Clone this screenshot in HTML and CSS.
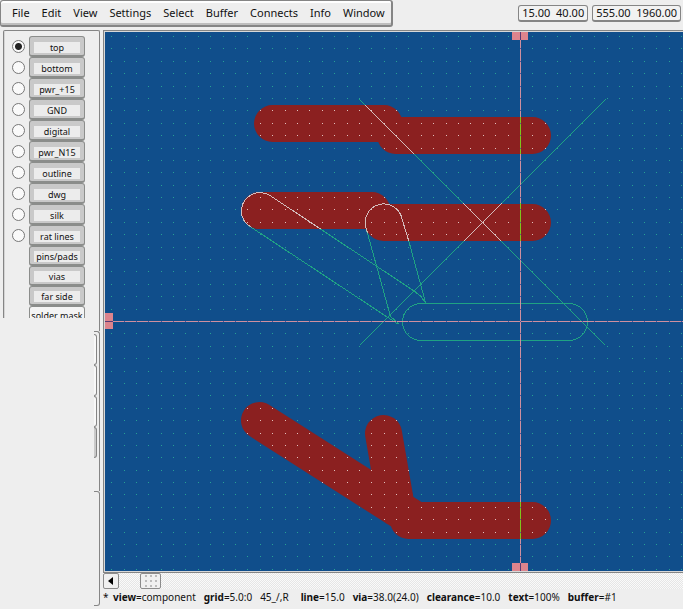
FILE: index.html
```html
<!DOCTYPE html>
<html lang="en">
<head>
<meta charset="utf-8">
<title>PCB layout</title>
<link rel="stylesheet" href="styles.css">
</head>
<body>
<header class="topbar">
  <nav class="menu">
    <button>File</button><button>Edit</button><button>View</button><button>Settings</button><button>Select</button><button>Buffer</button><button>Connects</button><button>Info</button><button>Window</button>
  </nav>
  <div class="readouts">
    <output class="readout">15.00&nbsp; 40.00</output>
    <output class="readout">555.00&nbsp; 1960.00</output>
  </div>
</header>
<main class="workspace">
  <aside class="sidebar">
    <div class="layers">
      <div class="layer"><input type="radio" name="layer" id="l0" checked><label class="chip" for="l0"><span>top</span></label></div>
      <div class="layer"><input type="radio" name="layer" id="l1"><label class="chip" for="l1"><span>bottom</span></label></div>
      <div class="layer"><input type="radio" name="layer" id="l2"><label class="chip" for="l2"><span>pwr_+15</span></label></div>
      <div class="layer"><input type="radio" name="layer" id="l3"><label class="chip" for="l3"><span>GND</span></label></div>
      <div class="layer"><input type="radio" name="layer" id="l4"><label class="chip" for="l4"><span>digital</span></label></div>
      <div class="layer"><input type="radio" name="layer" id="l5"><label class="chip" for="l5"><span>pwr_N15</span></label></div>
      <div class="layer"><input type="radio" name="layer" id="l6"><label class="chip" for="l6"><span>outline</span></label></div>
      <div class="layer"><input type="radio" name="layer" id="l7"><label class="chip" for="l7"><span>dwg</span></label></div>
      <div class="layer"><input type="radio" name="layer" id="l8"><label class="chip" for="l8"><span>silk</span></label></div>
      <div class="layer"><input type="radio" name="layer" id="l9"><label class="chip" for="l9"><span>rat lines</span></label></div>
      <div class="layer extra"><button class="chip"><span>pins/pads</span></button></div>
      <div class="layer extra"><button class="chip"><span>vias</span></button></div>
      <div class="layer extra"><button class="chip"><span>far side</span></button></div>
      <div class="layer extra"><button class="chip off"><span>solder mask</span></button></div>
    </div>
    <div class="edge"></div>
    <div class="stubs"><i></i><i></i><i></i><i class="dark"></i></div>
    <div class="stubs last"></div>
  </aside>
  <section class="editor">
    <div class="board">
      <svg width="100%" height="100%" role="img" aria-label="Board">
        <defs>
          <clipPath id="copper">
            <rect x="149" y="73" width="149" height="37" rx="18.5"/>
            <rect x="272" y="85" width="174" height="37" rx="18.5"/>
            <rect x="135" y="159" width="151" height="38" rx="19"/>
            <rect x="259" y="171" width="187" height="38" rx="19"/>
            <rect x="285" y="470" width="161" height="37" rx="18.5"/>
          </clipPath>
          <g id="wires" fill="none" stroke-width="1">
            <path d="M254.500 67.500 500.500 313.500M500.500 67.500 254.500 313.500"/>
            <rect x="297.500" y="271.500" width="185" height="37" rx="18.500"/>
            <path d="M293.500 292.500 145 194.500A18.500 18.500 0 0 1 136.500 179 18.500 18.500 0 0 1 155 160.500 18.500 18.500 0 0 1 165 163.500L309 259 315 263.500 320.500 270.500 303.500 208 297 187A18.500 18.500 0 1 0 260.500 194L271 232 285.500 284.500 294 292"/>
          </g>
        </defs>
        <g class="trace">
          <path d="M167.500 91.500H279M290.500 103.500H427.500M154.500 178.500H267M278.500 190.500H427.500M303.500 488.500H427.500M154.500 388.500 308 486.500M278.500 401.500 291.500 476"/>
        </g>
        <use href="#wires" class="wire"/>
        <use href="#wires" class="wire-hot" clip-path="url(#copper)"/>
        <g id="grid"></g>
        <line class="cross" x1="415.5" y1="0" x2="415.5" y2="100%"/>
        <line class="cross" x1="0" y1="289.5" x2="100%" y2="289.5"/>
        <rect class="cross-hot" x="415" y="0" width="1" height="100%" clip-path="url(#copper)"/>
        <g id="ticks"></g>
        <g class="mark">
          <rect x="407" y="0" width="16" height="8"/>
          <rect x="0" y="281" width="8" height="16"/>
          <rect x="407" y="531" width="16" height="8"/>
        </g>
        <path class="mark-line" d="M415.500 0V8M415.500 531V539M0 289.500H8"/>
      </svg>
    </div>
    <div class="scroll">
      <button class="arrow" aria-label="Scroll left"><svg width="6" height="8" viewBox="0 0 6 8"><path d="M5 0V8L0 4Z"/></svg></button>
      <div class="thumb"><svg width="12" height="12" viewBox="0 0 12 12"><path d="M0 1H2M5 1H7M10 1H12M0 6H2M5 6H7M10 6H12M0 11H2M5 11H7M10 11H12"/></svg></div>
    </div>
    <footer class="status"><span class="flag">*</span><span><b>view</b>=component</span><span><b>grid</b>=5.0:0</span><span>45_/,R</span><span class="wide"><b>line</b>=15.0</span><span><b>via</b>=38.0(24.0)</span><span><b>clearance</b>=10.0</span><span><b>text</b>=100%</span><span><b>buffer</b>=#1</span></footer>
  </section>
</main>
<script src="grid.js"></script>
</body>
</html>
```
FILE: grid.js
```js
// Draws the snap grid, recoloured where it lies on copper or on the crosshair.
const PITCH = 12.39, CX = 415, CY = 289;
const grid = document.getElementById('grid');
const ticks = document.getElementById('ticks');
const trace = document.querySelector('.trace path');
const NS = 'http://www.w3.org/2000/svg';
let plain = '', hot = '', axis = '';
for (let i = -33; i < 150; i++) {
  for (let j = -23; j < 100; j++) {
    const x = CX + Math.round(i * PITCH), y = CY + Math.round(j * PITCH);
    const cell = `M${x} ${y}h1v1h-1z`;
    if (i === 0 || j === 0) axis += cell;
    else if (trace.isPointInStroke(new DOMPoint(x, y))) hot += cell;
    else plain += cell;
  }
}
function add(parent, cls, d) {
  const p = document.createElementNS(NS, 'path');
  p.setAttribute('class', cls);
  p.setAttribute('d', d);
  parent.appendChild(p);
}
add(grid, 'dot', plain);
add(grid, 'dot-hot', hot);
add(ticks, 'dot-axis', axis);
```
FILE: styles.css
```css
* { box-sizing: border-box; }
body {
  margin: 0;
  height: 100vh;
  display: flex;
  flex-direction: column;
  background: #eeeeee;
  color: #111;
  font: 11px/16px "Noto Sans", sans-serif;
  overflow: hidden;
}
button { font: inherit; color: inherit; margin: 0; }
.topbar {
  height: 30px;
  flex: none;
  display: flex;
  justify-content: space-between;
  align-items: flex-start;
}
.menu {
  display: flex;
  gap: 12px;
  height: 27px;
  padding: 0 6px 0 11px;
  border: 2px solid #858585;
  border-top-width: 1px;
  border-left-width: 1px;
  border-radius: 3px;
  box-shadow: inset 0 2px #fff, inset 0 -2px #bebebe;
}
.menu button { border: 0; padding: 0; background: none; }
.readouts { display: flex; gap: 4px; padding: 5px 2px 0 0; }
.readout {
  height: 17px;
  padding: 0 3px;
  line-height: 14px;
  border: 1px solid #858585;
  border-bottom-width: 2px;
  border-radius: 3px;
  background: #f2f2f2;
}
.workspace { flex: 1; display: flex; min-height: 0; }
.sidebar {
  width: 100px;
  flex: none;
  display: flex;
  flex-direction: column;
  align-items: flex-end;
}
.layers {
  width: 97px;
  height: 288px;
  flex: none;
  overflow: hidden;
  padding-top: 5px;
  border: 1px solid #858585;
  border-bottom: 0;
  border-radius: 2px 2px 0 0;
  box-shadow: inset 1px 0 #d4d4d4;
}
.layer { display: flex; height: 21px; gap: 4px; padding-left: 8px; }
.layer.extra { height: 20px; padding-left: 25px; }
.layer input {
  appearance: none;
  flex: none;
  width: 13px;
  height: 13px;
  margin: 4px 0 0;
  border: 1px solid #777;
  border-radius: 50%;
  background: #fafafa;
}
.layer input:checked { background: radial-gradient(circle, #222 0 3px, #fafafa 4px); }
.chip {
  width: 56px;
  display: flex;
  justify-content: center;
  align-items: center;
  padding: 2px 0 0;
  border: 1px solid #8b8d8b;
  border-bottom-width: 2px;
  border-radius: 3px;
  background: #c9c9c9;
  font-size: 9px;
  line-height: 11px;
}
.chip span {
  width: 46px;
  height: 11px;
  display: flex;
  justify-content: center;
  background: #ececec;
  white-space: nowrap;
}
.chip.off { padding: 0; }
.chip.off, .chip.off span { background: #f4f4f4; }
.edge { width: 1px; height: 13px; background: #858585; }
.stubs {
  width: 6px;
  height: 160px;
  flex: none;
  padding: 2px 2px 0 0;
  border: solid #858585;
  border-width: 1px 1px 0 0;
  border-radius: 0 3px 0 0;
}
.stubs i {
  display: block;
  height: 31px;
  border: solid #858585;
  border-width: 1px 1px 1px 0;
  border-radius: 0 3px 3px 0;
  background: #f8f8f8;
}
.stubs .dark { background: #c9c9c9; }
.stubs.last { height: 115px; border-bottom-width: 1px; border-radius: 0 3px 3px 0; }
.editor {
  flex: 1;
  min-width: 0;
  margin-left: 3px;
  display: flex;
  flex-direction: column;
}
.board {
  flex: 1;
  min-height: 0;
  border: solid #858585;
  border-width: 1px 0 1px 1px;
  padding: 1px 0 1px 1px;
  background: #d8d8d8;
  overflow: hidden;
}
.board svg { display: block; background: #104e8b; }
.trace { fill: none; stroke: #8b2020; stroke-width: 37; stroke-linecap: round; }
.wire { stroke: #1fa383; shape-rendering: crispEdges; }
.wire-hot { stroke: #d4bdbd; shape-rendering: crispEdges; }
.dot { fill: #27a094; }
.dot-hot { fill: #e2c0bd; }
.dot-axis { fill: #5c5494; }
.cross { stroke: #cf8f9f; stroke-width: 1; shape-rendering: crispEdges; }
.cross-hot { fill: #7fc41c; }
.mark { fill: #dd848d; }
.mark-line { stroke: #5a3a75; }
.scroll {
  height: 16px;
  flex: none;
  display: flex;
  gap: 21px;
  background: repeating-conic-gradient(#e6e6e6 0 25%, #fafafa 0 50%) 0 0 / 2px 2px;
}
.arrow, .thumb {
  height: 16px;
  display: flex;
  align-items: center;
  justify-content: center;
  padding: 0;
  border: 1px solid #8b8b8b;
  border-radius: 2px;
  background: #f0f0f0;
}
.arrow { width: 16px; }
.thumb { width: 21px; }
.thumb path { stroke: #bbb; stroke-width: 2; }
.status {
  height: 20px;
  flex: none;
  display: flex;
  gap: 8px;
  line-height: 17px;
  white-space: nowrap;
  font-size: 10px;
}
.status .flag { width: 2px; }
.status .wide { margin-left: 4px; }
```
